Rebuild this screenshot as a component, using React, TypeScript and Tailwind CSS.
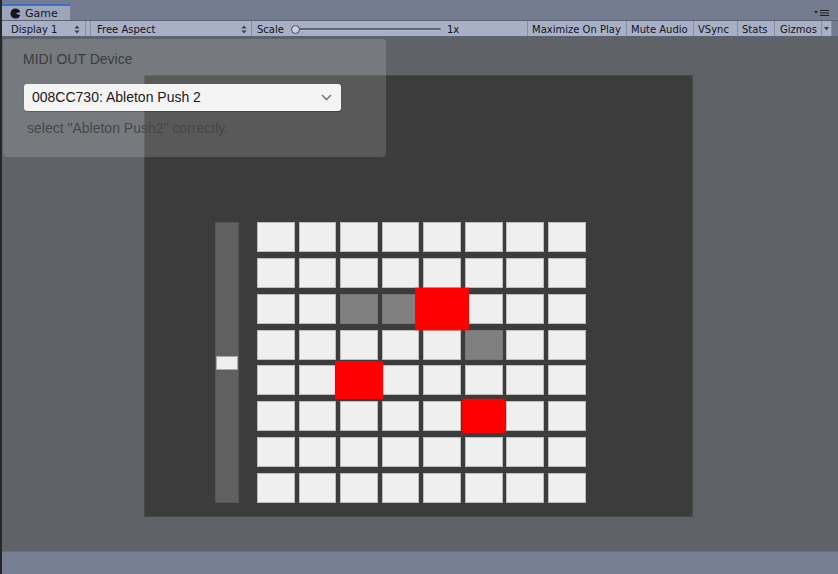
import React from 'react'

type Cell = 'w' | 'g' | 'r'

const rows: Cell[][] = [
  ['w', 'w', 'w', 'w', 'w', 'w', 'w', 'w'],
  ['w', 'w', 'w', 'w', 'w', 'w', 'w', 'w'],
  ['w', 'w', 'g', 'g', 'r', 'w', 'w', 'w'],
  ['w', 'w', 'w', 'w', 'w', 'g', 'w', 'w'],
  ['w', 'w', 'r', 'w', 'w', 'w', 'w', 'w'],
  ['w', 'w', 'w', 'w', 'w', 'r', 'w', 'w'],
  ['w', 'w', 'w', 'w', 'w', 'w', 'w', 'w'],
  ['w', 'w', 'w', 'w', 'w', 'w', 'w', 'w'],
]

// velocity-ish size for the lit pads
const redScale: Record<string, string> = {
  '2-4': 'scale-[1.42]',
  '4-2': 'scale-[1.27]',
  '5-5': 'scale-[1.15]',
}

function UpDown() {
  return (
    <svg width="6" height="9" viewBox="0 0 6 9" className="shrink-0">
      <path d="M3 0.5 L5.5 3.5 H0.5 Z M3 8.5 L5.5 5.5 H0.5 Z" fill="#3a3e48" />
    </svg>
  )
}

function GameIcon() {
  return (
    <svg width="11" height="11" viewBox="0 0 11 11" className="shrink-0">
      <path d="M5.5 0.5 A5 5 0 1 0 10.3 7 L5.5 5.5 L10.3 4 A5 5 0 0 0 5.5 0.5 Z" fill="#15171c" />
    </svg>
  )
}

function ToolButton({ label, className }: { label: string; className: string }) {
  return (
    <div className={`flex h-full items-center border-l border-[#858da2] pt-[2px] ${className}`}>
      {label}
    </div>
  )
}

function Toolbar() {
  return (
    <div className="flex h-[17px] items-stretch border-y border-[#5d6376] bg-[#a8b0c5] text-[10px] leading-none text-[#121317]">
      <div className="flex w-[84px] items-center justify-between pl-[9px] pr-[5px] pt-[2px] border-r border-[#858da2]">
        <span>Display 1</span>
        <UpDown />
      </div>
      <div className="w-[5px] border-r border-[#858da2]" />
      <div className="flex w-[160px] items-center justify-between pl-[6px] pr-[4px] pt-[2px]">
        <span>Free Aspect</span>
        <UpDown />
      </div>
      <div className="flex w-[276px] items-center border-l border-[#858da2] pl-[5px] pt-[2px]">
        <span>Scale</span>
        <div className="relative ml-[7px] flex h-[9px] w-[150px] items-center">
          <div className="h-[3px] w-full rounded-full bg-[#5e6577] border-b border-[#b8c0d3]" />
          <div className="absolute left-0 top-0 h-[9px] w-[9px] rounded-full border border-[#454a56] bg-[#c9d0e0]" />
        </div>
        <span className="ml-[6px]">1x</span>
      </div>
      <ToolButton label="Maximize On Play" className="w-[99px] pl-[4px]" />
      <ToolButton label="Mute Audio" className="w-[67px] pl-[4px]" />
      <ToolButton label="VSync" className="w-[44px] pl-[4px]" />
      <ToolButton label="Stats" className="w-[37px] pl-[4px]" />
      <ToolButton label="Gizmos" className="w-[47px] pl-[5px]" />
      <div className="flex w-[11px] items-center justify-center border-x border-[#858da2]">
        <svg width="5" height="4" viewBox="0 0 5 4">
          <path d="M0 0 H5 L2.5 3.5 Z" fill="#3a3e48" />
        </svg>
      </div>
      <div className="flex-1 bg-[#747c90]" />
    </div>
  )
}

function PadGrid() {
  return (
    <div className="grid grid-cols-[repeat(8,37.7px)] grid-rows-[repeat(8,30px)] gap-x-[3.9px] gap-y-[5.87px]">
      {rows.map((row, r) =>
        row.map((c, i) => {
          const key = `${r}-${i}`
          if (c === 'r') {
            return <div key={key} className={`relative z-10 bg-[#ff0000] ${redScale[key]}`} />
          }
          if (c === 'g') {
            return <div key={key} className="border border-[#767676] bg-[#808080]" />
          }
          return <div key={key} className="border border-[#bdbdbd] bg-[#efefef]" />
        })
      )}
    </div>
  )
}

function MidiPanel() {
  return (
    <div className="absolute left-[1px] top-[2px] z-20 h-[118px] w-[383px] rounded-[4px] bg-white/15 px-[20px] pt-[12px] font-['Liberation_Sans',Arial,sans-serif]">
      <div className="text-[14px] leading-[16px] text-[#3b3c3e]">MIDI OUT Device</div>
      <div className="mt-[17px] ml-[1px] flex h-[27px] w-[317px] items-center justify-between rounded-[3px] bg-[#f4f4f4] pl-[8px] pr-[9px] shadow-[0_1px_1px_rgba(0,0,0,0.25)]">
        <span className="text-[14px] text-[#202020]">008CC730: Ableton Push 2</span>
        <svg width="11" height="7" viewBox="0 0 11 7">
          <path d="M1 1 L5.5 5.5 L10 1" fill="none" stroke="#6a6a6a" strokeWidth="1.3" />
        </svg>
      </div>
      <div className="mt-[9px] ml-[4px] text-[14px] leading-[16px] text-[#45474a]">
        select "Ableton Push2" correctly.
      </div>
    </div>
  )
}

export default function App() {
  return (
    <div className="flex h-[574px] w-[838px] flex-col overflow-hidden border-l-2 border-[#262729] bg-[#747c90] font-['DejaVu_Sans',sans-serif]">
      {/* tab strip */}
      <div className="flex h-[20px] items-end justify-between bg-[#747c90]">
        <div className="flex h-[16px] w-[68px] items-center gap-[4px] border-t-2 border-[#3f6fcb] bg-[#9da5ba] pl-[8px] text-[11px] leading-none text-[#15171c]">
          <GameIcon />
          <span>Game</span>
        </div>
        <svg width="16" height="8" viewBox="0 0 16 8" className="mb-[3px] mr-[8px]">
          <path d="M0 2 H4 L2 4.5 Z" fill="#1e2026" />
          <path d="M6 1.5 H15 M6 4 H15 M6 6.5 H15" stroke="#1e2026" strokeWidth="1.1" />
        </svg>
      </div>

      <Toolbar />

      {/* game view */}
      <div className="relative flex-1 bg-[#5f6368] pl-[142px] pt-[38px]">
        <MidiPanel />
        <div className="flex h-[442px] w-[549px] border border-[#4a4a4a] bg-[#3c3c3c] pl-[70px] pt-[146px]">
          <div className="relative h-[281px] w-[24px] border border-[#565656] bg-[#606060]">
            <div className="absolute left-0 top-[133px] h-[14px] w-full border border-[#a9a9a9] bg-[#efefef]" />
          </div>
          <div className="ml-[18px]">
            <PadGrid />
          </div>
        </div>
      </div>

      {/* status bar */}
      <div className="h-[23px] border-t border-[#6a6f7e] bg-[#767e93]" />
    </div>
  )
}
